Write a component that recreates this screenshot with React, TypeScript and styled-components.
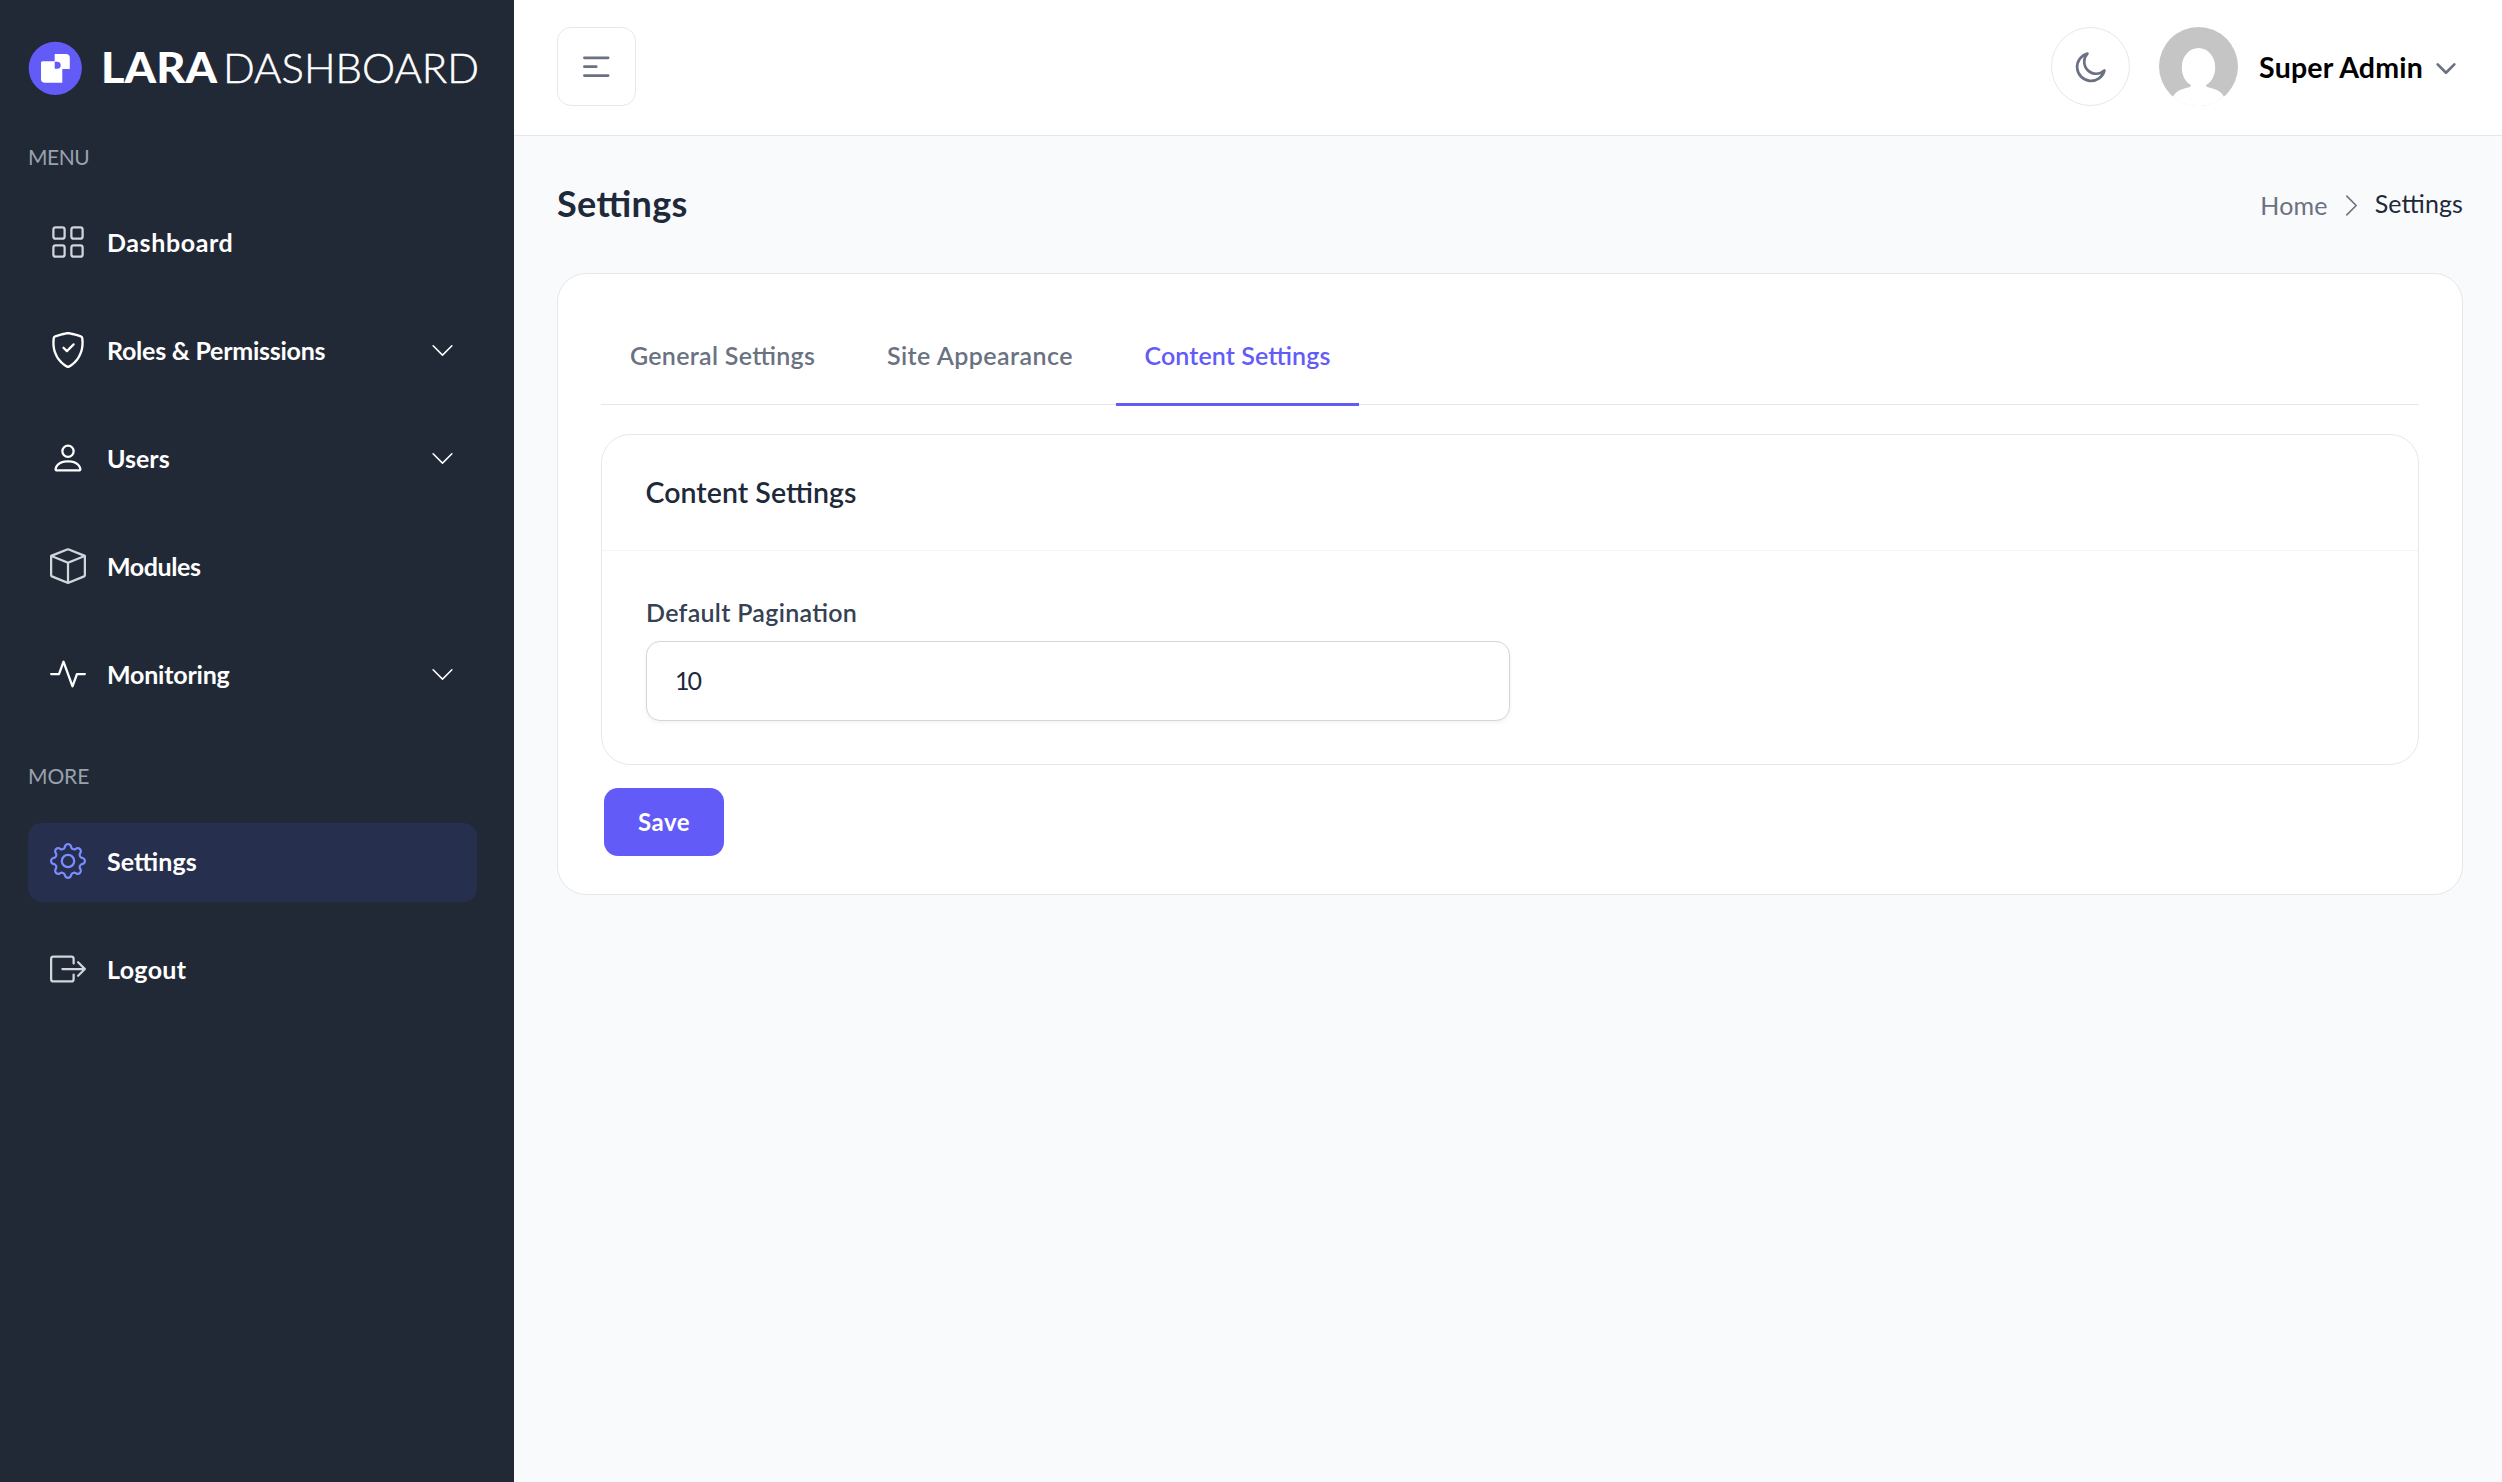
import React from "react";
import styled, { createGlobalStyle } from "styled-components";
import {
  BsActivity,
  BsBox,
  BsBoxArrowRight,
  BsChevronDown,
  BsChevronRight,
  BsGear,
  BsGrid,
  BsPerson,
  BsShieldCheck,
} from "react-icons/bs";

const c = {
  brand: "#635bf8",
  sidebar: "#222936",
  active: "#262f4d",
  page: "#f9fafc",
  line: "#e5e7eb",
  ink: "#1e2939",
  muted: "#6a7282",
};

const GlobalStyle = createGlobalStyle`
  *, *::before, *::after { box-sizing: border-box; }
  body {
    margin: 0;
    background: ${c.page};
    color: ${c.ink};
    font-family: Lato, "Open Sans", sans-serif;
    font-feature-settings: "liga" 1;
    -webkit-font-smoothing: antialiased;
  }
  button, input { font: inherit; font-feature-settings: inherit; }
`;

const Shell = styled.div`
  display: flex;
  height: 100vh;
  overflow: hidden;
`;

const Sidebar = styled.aside`
  flex: none;
  width: 514px;
  padding: 40px 0 0 28px;
  background: ${c.sidebar};
`;

const Brand = styled.div`
  height: 57px;
  margin-bottom: 42px;
  svg { display: block; }
`;

const Group = styled.nav`
  margin-bottom: 43px;
`;

const GroupTitle = styled.h3<{ $track?: number }>`
  margin: 0 0 29px;
  font-size: 21px;
  font-weight: 400;
  line-height: 36px;
  letter-spacing: ${(p) => p.$track ?? 0}px;
  color: #99a1af;
`;

const Menu = styled.ul`
  display: flex;
  flex-direction: column;
  gap: 29px;
  margin: 0;
  padding: 0;
  list-style: none;
`;

const MenuItem = styled.li<{ $active?: boolean }>`
  display: flex;
  align-items: center;
  width: 449px;
  height: 79px;
  padding: 0 23px 3px 21px;
  border-radius: 14px;
  background: ${(p) => (p.$active ? c.active : "transparent")};
`;

const MenuIcon = styled.span<{ $tone: string }>`
  display: flex;
  margin-right: 21.5px;
  padding-left: 0.5px;
  color: ${(p) => p.$tone};
  svg { width: 36px; height: 36px; }
`;

const MenuLabel = styled.span<{ $track: number }>`
  flex: 1;
  font-size: 25px;
  font-weight: 700;
  line-height: 36px;
  letter-spacing: ${(p) => p.$track}px;
  color: #fff;
`;

const MenuCaret = styled(BsChevronDown)`
  width: 25px;
  height: 25px;
  margin-right: -1px;
  color: #fff;
`;

const Content = styled.div`
  flex: 1;
  min-width: 0;
  display: flex;
  flex-direction: column;
`;

const Header = styled.header`
  display: flex;
  align-items: center;
  justify-content: space-between;
  height: 136px;
  padding: 0 40px 2px 43px;
  background: #fff;
  border-bottom: 1px solid ${c.line};
`;

const IconButton = styled.button<{ $round?: boolean }>`
  display: flex;
  align-items: center;
  justify-content: center;
  width: 79px;
  height: 79px;
  padding: 0;
  border: 1px solid ${c.line};
  border-radius: ${(p) => (p.$round ? "50%" : "14px")};
  background: #fff;
  color: ${c.muted};
`;

const HeaderRight = styled.div`
  display: flex;
  align-items: center;
`;

const Profile = styled.div`
  display: flex;
  align-items: center;
  margin-left: 29px;
  svg { display: block; }
`;

const ProfileName = styled.span`
  margin: 0 7px 0 21px;
  font-size: 28.5px;
  font-weight: 700;
  line-height: 40px;
  letter-spacing: 0.2px;
  color: #000;
`;

const Main = styled.main`
  padding: 40px 39px 0 43px;
`;

const TitleRow = styled.div`
  display: flex;
  align-items: center;
  justify-content: space-between;
  height: 54px;
  margin-bottom: 43px;
`;

const PageTitle = styled.h2`
  margin: 0;
  font-size: 36px;
  font-weight: 700;
  line-height: 54px;
  letter-spacing: 0.35px;
  color: ${c.ink};
`;

const Crumbs = styled.div`
  display: flex;
  align-items: center;
  font-size: 25px;
  line-height: 36px;
`;

const CrumbLink = styled.a`
  display: flex;
  align-items: center;
  margin-right: 11px;
  padding-top: 4px;
  letter-spacing: 0.2px;
  color: ${c.muted};
  svg { width: 25px; height: 25px; margin-left: 11px; }
`;

const CrumbCurrent = styled.span`
  letter-spacing: 0.1px;
  color: ${c.ink};
`;

const Card = styled.section`
  padding: 43px 43px 38px;
  border: 1px solid ${c.line};
  border-radius: 29px;
  background: #fff;
`;

const Tabs = styled.div`
  display: flex;
  gap: 14.5px;
  height: 88px;
  border-bottom: 1px solid ${c.line};
`;

const Tab = styled.button<{ $active?: boolean; $track: number }>`
  width: 243px;
  height: 89px;
  padding: 0 0 10px;
  border: 0;
  border-bottom: 3px solid ${(p) => (p.$active ? c.brand : "transparent")};
  background: none;
  font-size: 25px;
  font-weight: 600;
  letter-spacing: ${(p) => p.$track}px;
  white-space: nowrap;
  color: ${(p) => (p.$active ? c.brand : c.muted)};
`;

const Panel = styled.div`
  margin-top: 29px;
  border: 1px solid ${c.line};
  border-radius: 29px;
`;

const PanelTitle = styled.h3`
  margin: 0;
  padding: 0 43.5px;
  border-bottom: 1px solid #f3f4f6;
  font-size: 28.5px;
  font-weight: 600;
  line-height: 115px;
  letter-spacing: 0.05px;
  color: ${c.ink};
`;

const PanelBody = styled.div`
  padding: 43px 44px;
`;

const FieldLabel = styled.label`
  display: block;
  margin-bottom: 10px;
  font-size: 25px;
  font-weight: 600;
  line-height: 37px;
  letter-spacing: 0.3px;
  color: #364153;
`;

const Field = styled.input`
  display: block;
  width: 864px;
  height: 80px;
  padding: 0 28px 2px;
  border: 1px solid #d1d5dc;
  border-radius: 14px;
  outline: 0;
  background: #fff;
  box-shadow: 0 2px 4px rgba(16, 24, 40, 0.05);
  font-size: 25px;
  letter-spacing: -2px;
  color: ${c.ink};
`;

const SaveButton = styled.button`
  display: block;
  width: 120px;
  height: 68px;
  margin: 23px 0 0 3px;
  padding: 0 0 1px;
  border: 0;
  border-radius: 14px;
  background: ${c.brand};
  font-size: 24px;
  font-weight: 700;
  letter-spacing: 0.5px;
  color: #fff;
`;

const LogoArt = () => (
  <svg width="470" height="57" viewBox="0 0 470 57">
    <circle cx="27.3" cy="28.3" r="26.6" fill={c.brand} />
    <path
      d="M14.5 21.3H26.7V14H38Q41.8 14 41.8 18V29H34.3V42.8H17Q13 42.8 13 39V22.8Q13 21.3 14.5 21.3Z"
      fill="#fff"
    />
    <path d="M26.7 21.8H29.3A3.4 3.5 0 0 1 29.3 28.8H26.7Z" fill={c.brand} />
    <g fill="#fff" fontFamily="Lato, sans-serif" fontSize="42">
      <text x="73" y="43.4" fontWeight="900" textLength="116" lengthAdjust="spacingAndGlyphs">LARA</text>
      <text x="195" y="43.4" fontWeight="300" stroke="#fff" strokeWidth="0.5" textLength="256" lengthAdjust="spacingAndGlyphs">DASHBOARD</text>
    </g>
  </svg>
);

const MenuLinesArt = () => (
  <svg width="28.5" height="21.4" viewBox="0 0 16 12" fill="none" stroke="currentColor" strokeWidth="1.5" strokeLinecap="round">
    <path d="M1.33 1H14.67M1.33 6H8M1.33 11H14.67" />
  </svg>
);

const MoonArt = () => (
  <svg width="36" height="36" viewBox="0 0 20 20" fill="none" stroke="currentColor" strokeWidth="1.5" strokeLinejoin="round">
    <path d="M17.45 11.97A7.71 7.71 0 1 1 8.03 2.55C6.9 3.7 6.25 5.3 6.25 7.09C6.25 10.77 9.23 13.75 12.92 13.75C14.67 13.75 16.26 13.08 17.45 11.97Z" />
  </svg>
);

const CaretArt = () => (
  <svg width="32" height="35.6" viewBox="0 0 18 20" fill="none" stroke={c.muted} strokeWidth="1.5" strokeLinecap="round" strokeLinejoin="round">
    <path d="M4.3125 8.65625L9 13.3437L13.6875 8.65625" />
  </svg>
);

const AvatarArt = () => (
  <svg width="79" height="79" viewBox="0 0 79 79">
    <clipPath id="avatar-round">
      <circle cx="39.5" cy="39.5" r="39.5" />
    </clipPath>
    <g clipPath="url(#avatar-round)">
      <rect width="79" height="79" fill="#c5c5c5" />
      <path
        d="M39.5 21C49 21 56.2 29.5 56.2 40.5C56.2 48.5 52.6 55 47 58C47 60 49 60.3 52 61C58.5 62.5 63 65.5 65.2 70V79H13.8V70C16 65.5 20.5 62.5 27 61C30 60.3 32 60 32 58C26.4 55 22.8 48.5 22.8 40.5C22.8 29.5 30 21 39.5 21Z"
        fill="#fff"
      />
      <rect y="70" width="79" height="9" fill="#fff" />
    </g>
  </svg>
);

type Entry = {
  label: string;
  icon: React.ReactNode;
  tone: string;
  track: number;
  caret?: boolean;
  active?: boolean;
};

const SOFT = "#d1d5dc";

const mainMenu: Entry[] = [
  { label: "Dashboard", icon: <BsGrid />, tone: SOFT, track: 0.6 },
  { label: "Roles & Permissions", icon: <BsShieldCheck />, tone: "#fff", track: -0.25, caret: true },
  { label: "Users", icon: <BsPerson />, tone: "#fff", track: 0, caret: true },
  { label: "Modules", icon: <BsBox />, tone: SOFT, track: -0.4 },
  { label: "Monitoring", icon: <BsActivity />, tone: "#fff", track: -0.2, caret: true },
];

const moreMenu: Entry[] = [
  { label: "Settings", icon: <BsGear />, tone: "#7b8cff", track: 0.1, active: true },
  { label: "Logout", icon: <BsBoxArrowRight />, tone: SOFT, track: 0.35 },
];

const MenuList = ({ entries }: { entries: Entry[] }) => (
  <Menu>
    {entries.map((e) => (
      <MenuItem key={e.label} $active={e.active}>
        <MenuIcon $tone={e.tone}>{e.icon}</MenuIcon>
        <MenuLabel $track={e.track}>{e.label}</MenuLabel>
        {e.caret && <MenuCaret />}
      </MenuItem>
    ))}
  </Menu>
);

export default function App() {
  return (
    <>
      <GlobalStyle />
      <Shell>
        <Sidebar>
          <Brand>
            <LogoArt />
          </Brand>
          <Group>
            <GroupTitle $track={-0.5}>MENU</GroupTitle>
            <MenuList entries={mainMenu} />
          </Group>
          <Group>
            <GroupTitle $track={-0.1}>MORE</GroupTitle>
            <MenuList entries={moreMenu} />
          </Group>
        </Sidebar>
        <Content>
          <Header>
            <IconButton aria-label="Toggle sidebar">
              <MenuLinesArt />
            </IconButton>
            <HeaderRight>
              <IconButton $round aria-label="Toggle dark mode">
                <MoonArt />
              </IconButton>
              <Profile>
                <AvatarArt />
                <ProfileName>Super Admin</ProfileName>
                <CaretArt />
              </Profile>
            </HeaderRight>
          </Header>
          <Main>
            <TitleRow>
              <PageTitle>Settings</PageTitle>
              <Crumbs>
                <CrumbLink>
                  Home
                  <BsChevronRight />
                </CrumbLink>
                <CrumbCurrent>Settings</CrumbCurrent>
              </Crumbs>
            </TitleRow>
            <Card>
              <Tabs>
                <Tab $track={0.3}>General Settings</Tab>
                <Tab $track={0.45}>Site Appearance</Tab>
                <Tab $active $track={0.1}>Content Settings</Tab>
              </Tabs>
              <Panel>
                <PanelTitle>Content Settings</PanelTitle>
                <PanelBody>
                  <FieldLabel htmlFor="pagination">Default Pagination</FieldLabel>
                  <Field id="pagination" defaultValue="10" />
                </PanelBody>
              </Panel>
              <SaveButton>Save</SaveButton>
            </Card>
          </Main>
        </Content>
      </Shell>
    </>
  );
}
